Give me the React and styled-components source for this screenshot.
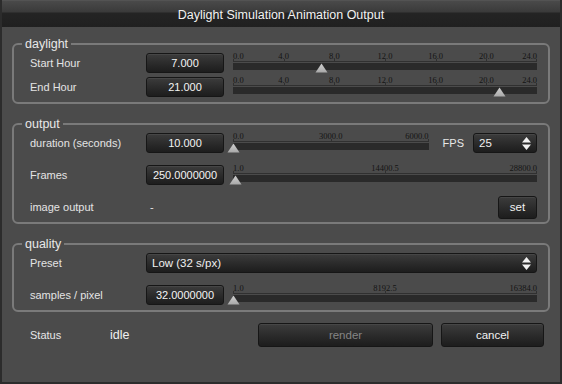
import React from 'react';
import styled, {createGlobalStyle} from 'styled-components';

const GlobalStyle = createGlobalStyle`
	html, body {
		margin: 0;
		background: #2b2b2b;
	}
	* {
		box-sizing: border-box;
	}
`;

const Window = styled.div`
	width: 562px;
	height: 384px;
	display: flex;
	flex-direction: column;
	background: #4b4b4b;
	border-left: 2px solid #2c2c2c;
	border-right: 2px solid #2c2c2c;
	border-bottom: 2px solid #2c2c2c;
	font-family: "Liberation Sans", Arial, sans-serif;
	color: #e6e6e6;
`;

const TitleBar = styled.div`
	height: 27px;
	flex-shrink: 0;
	display: flex;
	align-items: center;
	justify-content: center;
	padding-top: 3px;
	font-size: 12.5px;
	color: #f2f2f2;
	background: linear-gradient(#5c5c5c 0, #4a4a4a 1px, #3a3a3a 12px, #242424 13px, #202020 100%);
`;

const Content = styled.div`
	display: flex;
	flex-direction: column;
	gap: 14px;
	padding: 11px 10px 0 10px;
`;

const Group = styled.fieldset`
	margin: 0;
	padding: 0;
	border: 2px solid #7a7a7a;
	border-radius: 6px;
	min-width: 0;
`;

const Legend = styled.legend`
	margin-left: 8px;
	padding: 0 3px;
	font-size: 12.5px;
	line-height: 12px;
	color: #e8e8e8;
`;

const GroupBody = styled.div`
	display: flex;
	flex-direction: column;
	gap: ${p => p.$gap || 0}px;
	padding: 1px 11px 3px 16px;
`;

const Row = styled.div`
	display: grid;
	grid-template-columns: 107px 78px 1fr;
	column-gap: 9px;
	align-items: center;
	height: 24px;
`;

const Label = styled.div`
	font-size: 11px;
	color: #e4e4e4;
	white-space: nowrap;
`;

const darkFace = `
	background: linear-gradient(#3c3c3c, #2a2a2a 55%, #1d1d1d);
	border: 1px solid #161616;
	border-radius: 3px;
	box-shadow: inset 0 1px 0 rgba(255,255,255,0.06);
`;

const NumberBox = styled.div`
	${darkFace}
	height: 20px;
	display: flex;
	align-items: center;
	justify-content: center;
	font-size: 11px;
	color: #f4f4f4;
`;

const Cell = styled.div`
	display: flex;
	align-items: center;
	gap: ${p => p.$gap || 0}px;
	justify-content: ${p => p.$end ? 'flex-end' : 'flex-start'};
	grid-column: ${p => p.$span ? 'span 2' : 'auto'};
	min-width: 0;
`;

const Combo = styled.div`
	${darkFace}
	height: 20px;
	width: ${p => p.$width ? p.$width + 'px' : '100%'};
	display: flex;
	align-items: center;
	justify-content: space-between;
	padding: 0 5px 0 5px;
	font-size: 11.5px;
	color: #f0f0f0;
`;

const Button = styled.button`
	${darkFace}
	height: ${p => p.$height || 24}px;
	width: ${p => p.$width}px;
	padding: 0;
	font-family: inherit;
	font-size: 11.5px;
	color: ${p => p.disabled ? '#858585' : '#f2f2f2'};
`;

const Dash = styled.div`
	padding-left: 4px;
	font-size: 11px;
`;

const FpsLabel = styled.div`
	font-size: 11px;
	color: #e8e8e8;
	margin-left: 5px;
`;

const SliderWrap = styled.div`
	position: relative;
	flex: 1;
	height: 24px;
`;

const TickLabel = styled.span`
	position: absolute;
	top: 1px;
	font-family: "Liberation Serif", "Times New Roman", serif;
	font-size: 8.5px;
	line-height: 8px;
	color: #141414;
	white-space: nowrap;
	transform: translateX(${p => p.$align === 'start' ? '0' : p.$align === 'end' ? '-100%' : '-50%'});
`;

const Axis = styled.div`
	position: absolute;
	left: 0;
	right: 0;
	top: 10px;
	height: 1px;
	background: #303030;
`;

const Tick = styled.div`
	position: absolute;
	top: 8px;
	width: 1px;
	height: 3px;
	background: #303030;
`;

const Track = styled.div`
	position: absolute;
	left: 0;
	right: 0;
	top: 12px;
	height: 7px;
	background: #2a2a2a;
`;

const Thumb = styled.svg`
	position: absolute;
	top: 12px;
	width: 13px;
	height: 10px;
	margin-left: -6.5px;
`;

const StatusRow = styled.div`
	display: flex;
	align-items: center;
	height: 24px;
	margin-top: -3px;
	padding-left: 18px;
`;

const StatusLabel = styled.div`
	width: 80px;
	font-size: 11px;
`;

const StatusValue = styled.div`
	width: 148px;
	font-size: 12.5px;
	color: #f0f0f0;
`;

const Buttons = styled.div`
	display: flex;
	gap: 8px;
`;

function Slider({min, max, value, marks}) {
	const pct = v => ((v - min) / (max - min)) * 100;
	return (
		<SliderWrap>
			{marks.map((m, i) => (
				<React.Fragment key={i}>
					<TickLabel
						$align={i === 0 ? 'start' : i === marks.length - 1 ? 'end' : 'mid'}
						style={{left: pct(m) + '%'}}
					>
						{m.toFixed(1)}
					</TickLabel>
					<Tick style={{left: i === marks.length - 1 ? 'calc(100% - 1px)' : pct(m) + '%'}} />
				</React.Fragment>
			))}
			<Axis />
			<Track />
			<Thumb viewBox="0 0 13 10" style={{left: pct(value) + '%'}}>
				<defs>
					<linearGradient id="thumbFill" x1="0" y1="0" x2="0" y2="1">
						<stop offset="0" stopColor="#d0d0d0" />
						<stop offset="1" stopColor="#a9a9a9" />
					</linearGradient>
				</defs>
				<polygon points="6.5,0.5 12.5,9.5 0.5,9.5" fill="url(#thumbFill)" />
			</Thumb>
		</SliderWrap>
	);
}

function SpinArrows() {
	return (
		<svg width="9" height="13" viewBox="0 0 9 13">
			<polygon points="4.5,0 9,5.5 0,5.5" fill="#f2f2f2" />
			<polygon points="0,7.5 9,7.5 4.5,13" fill="#f2f2f2" />
		</svg>
	);
}

const hourMarks = [0, 4, 8, 12, 16, 20, 24];

export default function App() {
	return (
		<>
			<GlobalStyle />
			<Window>
				<TitleBar>Daylight Simulation Animation Output</TitleBar>
				<Content>
					<Group>
						<Legend>daylight</Legend>
						<GroupBody>
							<Row>
								<Label>Start Hour</Label>
								<NumberBox>7.000</NumberBox>
								<Slider min={0} max={24} value={7} marks={hourMarks} />
							</Row>
							<Row>
								<Label>End Hour</Label>
								<NumberBox>21.000</NumberBox>
								<Slider min={0} max={24} value={21} marks={hourMarks} />
							</Row>
						</GroupBody>
					</Group>

					<Group>
						<Legend>output</Legend>
						<GroupBody $gap={8}>
							<Row>
								<Label>duration (seconds)</Label>
								<NumberBox>10.000</NumberBox>
								<Cell $gap={9}>
									<Slider min={0} max={6000} value={10} marks={[0, 3000, 6000]} />
									<FpsLabel>FPS</FpsLabel>
									<Combo $width={64}>
										<span>25</span>
										<SpinArrows />
									</Combo>
								</Cell>
							</Row>
							<Row>
								<Label>Frames</Label>
								<NumberBox>250.0000000</NumberBox>
								<Slider min={1} max={28800} value={250} marks={[1, 14400.5, 28800]} />
							</Row>
							<Row>
								<Label>image output</Label>
								<Dash>-</Dash>
								<Cell $end>
									<Button $width={39} $height={23}>set</Button>
								</Cell>
							</Row>
						</GroupBody>
					</Group>

					<Group>
						<Legend>quality</Legend>
						<GroupBody $gap={8}>
							<Row>
								<Label>Preset</Label>
								<Cell $span>
									<Combo>
										<span>Low (32 s/px)</span>
										<SpinArrows />
									</Combo>
								</Cell>
							</Row>
							<Row>
								<Label>samples / pixel</Label>
								<NumberBox>32.0000000</NumberBox>
								<Slider min={1} max={16384} value={32} marks={[1, 8192.5, 16384]} />
							</Row>
						</GroupBody>
					</Group>

					<StatusRow>
						<StatusLabel>Status</StatusLabel>
						<StatusValue>idle</StatusValue>
						<Buttons>
							<Button $width={175} disabled>render</Button>
							<Button $width={103}>cancel</Button>
						</Buttons>
					</StatusRow>
				</Content>
			</Window>
		</>
	);
}
